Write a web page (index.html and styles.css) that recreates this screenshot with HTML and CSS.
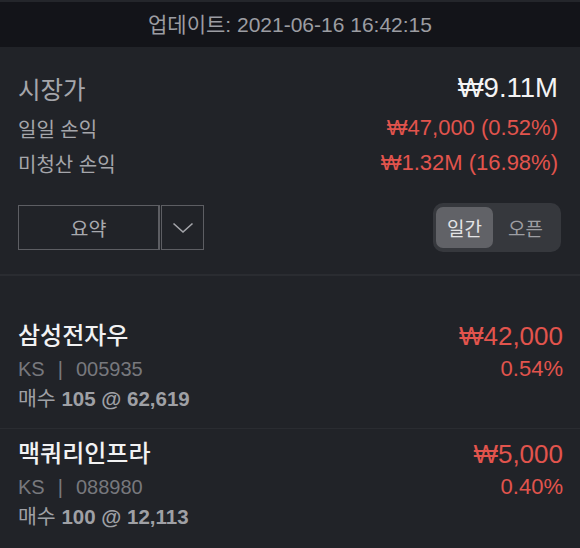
FILE: index.html
```html
<!DOCTYPE html>
<html lang="ko">
<head>
<meta charset="utf-8">
<link rel="stylesheet" href="styles.css">
</head>
<body>
<div class="topbar">업데이트: 2021-06-16 16:42:15</div>
<section class="summary">
  <div class="line line-main"><span class="label-lg">시장가</span><span class="value-lg">₩9.11M</span></div>
  <div class="line line-2"><span class="label">일일 손익</span><span class="value red">₩47,000 (0.52%)</span></div>
  <div class="line line-3"><span class="label">미청산 손익</span><span class="value red">₩1.32M (16.98%)</span></div>
  <div class="controls">
    <div class="dropdown">
      <div class="dd-main">요약</div>
      <div class="dd-arrow">
        <svg width="22" height="12" viewBox="0 0 22 12"><polyline points="1.5,1.5 11,10 20.5,1.5" fill="none" stroke="#a4a5aa" stroke-width="1.6"/></svg>
      </div>
    </div>
    <div class="segment">
      <div class="seg seg-on">일간</div>
      <div class="seg">오픈</div>
    </div>
  </div>
</section>
<div class="divider"></div>
<section class="list">
  <div class="pos">
    <div class="pos-left">
      <div class="name">삼성전자우</div>
      <div class="code">KS<span class="bar">|</span>005935</div>
      <div class="trade">매수 <b>105 @ 62,619</b></div>
    </div>
    <div class="pos-right">
      <div class="price red">₩42,000</div>
      <div class="pct red">0.54%</div>
    </div>
  </div>
  <div class="pos pos-next">
    <div class="pos-left">
      <div class="name">맥쿼리인프라</div>
      <div class="code">KS<span class="bar">|</span>088980</div>
      <div class="trade">매수 <b>100 @ 12,113</b></div>
    </div>
    <div class="pos-right">
      <div class="price red">₩5,000</div>
      <div class="pct red">0.40%</div>
    </div>
  </div>
</section>
</body>
</html>
```
FILE: styles.css
```css
html, body {
  margin: 0;
  padding: 0;
}
body {
  width: 580px;
  height: 548px;
  overflow: hidden;
  background: #212328;
  font-family: "Liberation Sans", "Noto Sans CJK KR", sans-serif;
  color: #a5a6ab;
}
.topbar {
  height: 45px;
  border-top: 2px solid #24262b;
  background: #131419;
  color: #9c9da2;
  font-size: 21px;
  line-height: 45px;
  text-align: center;
}
.summary {
  padding: 26px 18px 0 18px;
}
.line {
  display: flex;
  justify-content: space-between;
  align-items: center;
}
.line-main { height: 30px; }
.line-2 { height: 36px; margin-top: 7px; }
.line-3 { height: 34px; }
.label-lg {
  font-size: 24.5px;
  color: #a5a6ab;
}
.value-lg {
  font-size: 27.5px;
  color: #f4f4f5;
  margin-right: 4px;
}
.label {
  font-size: 20px;
  color: #a5a6ab;
}
.value {
  font-size: 22px;
  margin-right: 4px;
}
.red { color: #e2544d; }
.controls {
  margin-top: 23px;
  height: 49px;
  display: flex;
  justify-content: space-between;
  align-items: center;
}
.dropdown {
  display: flex;
  gap: 1px;
  height: 45px;
}
.dd-main {
  width: 139px;
  border: 1px solid #5d5e63;
  border-right-width: 2px;
  font-size: 19.5px;
  color: #a8a9ae;
  display: flex;
  align-items: center;
  justify-content: center;
}
.dd-arrow {
  width: 41px;
  border: 1px solid #5d5e63;
  display: flex;
  align-items: center;
  justify-content: center;
}
.segment {
  width: 122px;
  height: 41px;
  padding: 4px 3px;
  margin-right: 1px;
  background: #36383d;
  border-radius: 10px;
  display: flex;
}
.seg {
  flex: 1;
  display: flex;
  align-items: center;
  justify-content: center;
  font-size: 19px;
  color: #9d9ea3;
  border-radius: 7px;
}
.seg-on {
  flex: 0 0 57px;
  background: #616267;
  color: #e4e4e6;
}
.divider {
  margin-top: 22px;
  height: 2px;
  background: #2a2c31;
}
.list {
  padding-top: 35px;
}
.pos {
  display: flex;
  justify-content: space-between;
  padding: 9px 17px 15px 18px;
}
.pos-next {
  border-top: 1px solid #2a2c31;
}
.name {
  font-size: 24px;
  line-height: 32px;
  color: #f2f2f3;
  font-weight: 500;
}
.code {
  margin-top: 1px;
  font-size: 20px;
  line-height: 32px;
  color: #77787d;
}
.bar {
  margin: 0 13px 0 13px;
}
.trade {
  font-size: 20.5px;
  line-height: 28px;
  color: #9fa0a5;
}
.trade b {
  font-weight: 700;
}
.pos-right {
  text-align: right;
}
.price {
  font-size: 26px;
  line-height: 32px;
}
.pct {
  margin-top: 1px;
  font-size: 22px;
  line-height: 32px;
}
```
